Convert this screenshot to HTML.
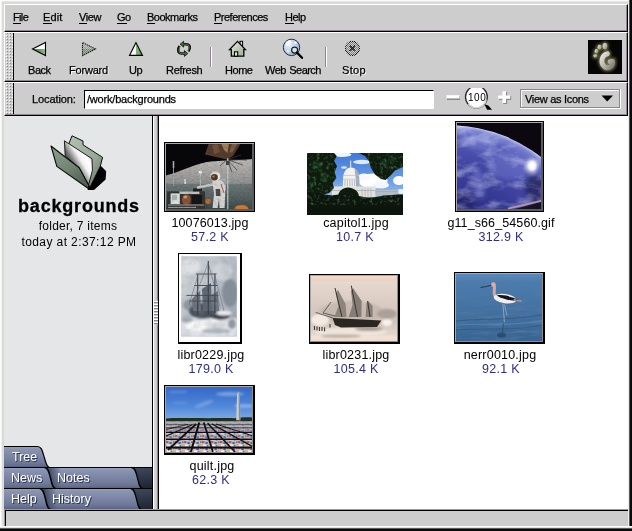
<!DOCTYPE html>
<html>
<head>
<meta charset="utf-8">
<title>Nautilus - backgrounds</title>
<style>
html,body{margin:0;padding:0;}
body{width:632px;height:531px;position:relative;overflow:hidden;background:#dadad6;font-family:"Liberation Sans",sans-serif;color:#000;}
.abs,.t,.m,.lab,.sz,.tab{position:absolute;}
.t,.m,.lab,.sz,.tab,.sb{white-space:nowrap;line-height:1;will-change:transform;}
/* window frame */
#frame-l0{left:0;top:0;width:1px;height:531px;background:#fdfdfd;}
#frame-l1{left:1px;top:1px;width:1px;height:527px;background:#f2f2ea;}
#frame-t0{left:0;top:0;width:631px;height:1px;background:#fbfbfb;}
#frame-t1{left:1px;top:1px;width:629px;height:1px;background:#e6e6de;}
#frame-r{left:628px;top:0;width:4px;height:531px;background:linear-gradient(to right,#ececec 0,#ececec 1px,#5c5c5c 1px,#5c5c5c 2px,#0a0a0a 2px);}
#frame-b{left:0;top:526px;width:632px;height:5px;background:linear-gradient(to bottom,#fdfdfd 0,#fdfdfd 1px,#e4e4e4 1px,#e4e4e4 2px,#5c5c5c 2px,#5c5c5c 3px,#0a0a0a 3px);}
/* bars */
.bar{position:absolute;left:4px;width:624px;background:#cdcdcd;box-sizing:border-box;border-top:1px solid #fff;border-left:1px solid #fff;border-bottom:1px solid #000;border-right:1px solid #000;}
.bar:after{content:"";position:absolute;left:0;top:0;right:0;bottom:0;border-right:1px solid #8e868e;border-bottom:1px solid #8e868e;}
.handle{position:absolute;left:0;top:0;width:8px;bottom:0;border-right:1px solid #000;
 background-color:#cdcdcd;
 background-image:radial-gradient(circle at 0.5px 0.5px,#fff 0.6px,rgba(255,255,255,0) 0.9px),radial-gradient(circle at 1.5px 1.5px,#8a8a8a 0.6px,rgba(138,138,138,0) 0.9px);
 background-size:3px 3px,3px 3px;background-position:1px 2px,1px 2px;}
.m{top:12px;font-size:11px;letter-spacing:-0.5px;-webkit-text-stroke:0.25px #000;}
.m u{text-decoration:none;border-bottom:1px solid #000;padding-bottom:0;padding-right:1.5px;margin-right:-1.5px;}
.t{font-size:11px;letter-spacing:-0.45px;top:65px;-webkit-text-stroke:0.25px #000;}
.dis{text-shadow:1px 1px 0 #fff;}
.sep{position:absolute;top:47px;width:1px;height:20px;background:#8e868e;border-right:1px solid #fff;}
.lab{font-size:12.5px;text-align:center;width:140px;letter-spacing:0.1px;}
.sz{font-size:12.5px;text-align:center;width:140px;color:#2e2e8a;letter-spacing:0.3px;}
.frame{position:absolute;box-sizing:border-box;border:1px solid #000;background:#5c5c5c;}
.frame:before{content:"";position:absolute;left:0;top:0;right:0;bottom:0;border-top:1px solid #a8a8a8;border-left:1px solid #a8a8a8;}
.frame svg{position:absolute;left:1px;top:1px;display:block;}
.f2{border-width:1px 2px 2px 1px;background:#8c8c8c;}
.f4{background:#fdfdfd;}
.f4:before{display:none;}
.f4 svg{left:0;top:0;}
svg{display:block;}
.tab{font-size:12.5px;color:#fff;text-shadow:1px 1px 0 #2c3450;}
</style>
</head>
<body>
<!-- window frame -->
<div class="abs" id="frame-t0"></div><div class="abs" id="frame-t1"></div>
<div class="abs" id="frame-l0"></div><div class="abs" id="frame-l1"></div>
<div class="abs" id="frame-r"></div><div class="abs" id="frame-b"></div>

<!-- MENUBAR -->
<div class="bar" id="menubar" style="top:4px;height:28px;"></div>
<span class="m" style="left:13px;letter-spacing:-0.65px;"><u>F</u>ile</span>
<span class="m" style="left:43px;letter-spacing:0.1px;"><u>E</u>dit</span>
<span class="m" style="left:79px;"><u>V</u>iew</span>
<span class="m" style="left:117px;"><u>G</u>o</span>
<span class="m" style="left:147px;"><u>B</u>ookmarks</span>
<span class="m" style="left:214px;"><u>P</u>references</span>
<span class="m" style="left:285px;"><u>H</u>elp</span>

<!-- TOOLBAR -->
<div class="bar" id="toolbar" style="top:32px;height:50px;"><div class="handle"></div></div>
<span class="t" style="left:28px;">Back</span>
<span class="t dis" style="left:69px;letter-spacing:-0.2px;">Forward</span>
<span class="t" style="left:129px;">Up</span>
<span class="t" style="left:166px;letter-spacing:-0.3px;">Refresh</span>
<span class="t" style="left:225px;">Home</span>
<span class="t" style="left:265px;word-spacing:1px;letter-spacing:-0.55px;">Web Search</span>
<span class="t dis" style="left:342px;letter-spacing:0.3px;">Stop</span>
<div class="sep" style="left:210px;"></div>
<div class="sep" style="left:325px;"></div>


<!-- TOOLBAR ICONS -->
<svg class="abs" style="left:0;top:0;z-index:5;" width="632" height="116" viewBox="0 0 632 116">
<defs>
<linearGradient id="gBack" x1="0" y1="0" x2="0" y2="1"><stop offset="0" stop-color="#fff"/><stop offset="0.5" stop-color="#f2f8f0"/><stop offset="0.5" stop-color="#4f8c48"/><stop offset="1" stop-color="#93c088"/></linearGradient>
<linearGradient id="gUp" x1="0" y1="0" x2="1" y2="0"><stop offset="0" stop-color="#fff"/><stop offset="0.5" stop-color="#f6f0f4"/><stop offset="0.5" stop-color="#86b87c"/><stop offset="1" stop-color="#5a9852"/></linearGradient>
<linearGradient id="gHome" x1="0" y1="0" x2="1" y2="1"><stop offset="0" stop-color="#fbfcfa"/><stop offset="0.45" stop-color="#c4ceba"/><stop offset="0.8" stop-color="#aab6a0"/><stop offset="1" stop-color="#e0e4da"/></linearGradient>
<radialGradient id="gGlobe" cx="0.35" cy="0.35" r="0.75"><stop offset="0" stop-color="#eef4fb"/><stop offset="0.6" stop-color="#b4cce6"/><stop offset="1" stop-color="#90acd0"/></radialGradient>
<pattern id="stip" width="2" height="2" patternUnits="userSpaceOnUse"><rect width="1" height="1" fill="#cdcdcd"/><rect x="1" y="1" width="1" height="1" fill="#cdcdcd"/></pattern>
<filter id="blur1" x="-30%" y="-30%" width="160%" height="160%"><feGaussianBlur stdDeviation="1.6"/></filter>
<filter id="blur05" x="-30%" y="-30%" width="160%" height="160%"><feGaussianBlur stdDeviation="0.5"/></filter>
<linearGradient id="gFoot" x1="0" y1="0" x2="1" y2="1"><stop offset="0" stop-color="#e8e4e0"/><stop offset="0.6" stop-color="#b0aca8"/><stop offset="1" stop-color="#807c78"/></linearGradient>
</defs>
<!-- back -->
<linearGradient id="gBackH" x1="0" y1="0" x2="1" y2="0"><stop offset="0" stop-color="#3f7f3c"/><stop offset="0.6" stop-color="#6aa262"/><stop offset="1" stop-color="#94c488"/></linearGradient>
<polygon points="32.5,49 45.5,42.5 45.5,55.5" fill="#fdfdfd"/>
<polygon points="32.5,49 45.5,49 45.5,55.5" fill="url(#gBackH)"/>
<polygon points="32.5,49 45.5,42.5 45.5,55.5" fill="none" stroke="#000" stroke-width="1.1"/>
<!-- forward (insensitive) -->
<linearGradient id="gFwd" x1="0" y1="0" x2="0" y2="1"><stop offset="0" stop-color="#b8bcb8"/><stop offset="0.5" stop-color="#a6aca6"/><stop offset="0.5" stop-color="#769274"/><stop offset="1" stop-color="#92a88e"/></linearGradient>
<pattern id="stipd" width="2" height="2" patternUnits="userSpaceOnUse"><rect width="1" height="1" fill="#fff" fill-opacity="0.35"/><rect x="1" y="1" width="1" height="1" fill="#fff" fill-opacity="0.35"/><rect x="1" y="0" width="1" height="1" fill="#000" fill-opacity="0.12"/><rect x="0" y="1" width="1" height="1" fill="#000" fill-opacity="0.12"/></pattern>
<polygon points="95.5,49 82.5,42.5 82.5,55.5" fill="url(#gFwd)"/>
<polygon points="95.5,49 82.5,42.5 82.5,55.5" fill="url(#stipd)" stroke="#1a1a1a" stroke-width="1.1" stroke-dasharray="1.4 0.7"/>
<!-- up -->
<polygon points="136,42.6 129.5,55.4 142.5,55.4" fill="url(#gUp)" stroke="#000" stroke-width="1.1"/>
<!-- refresh -->
<g fill="none" stroke-linecap="butt">
<path d="M188.4,51.4 C190.8,48.8 190.4,44.2 186.4,44.2 L183.4,44.2" stroke="#0a0a0a" stroke-width="2.4"/>
<path d="M179.6,46 C177.2,48.6 177.6,53.5 181.6,53.5 L184.6,53.5" stroke="#0a0a0a" stroke-width="2.4"/>
<polygon points="180.2,44.2 183.6,41.3 183.6,47.1" fill="#4a7040" stroke="#0a0a0a" stroke-width="0.8"/>
<polygon points="187.8,53.5 184.4,50.6 184.4,56.4" fill="#4a7040" stroke="#0a0a0a" stroke-width="0.8"/>
<path d="M188,50.9 C189.8,48.6 189.6,44.2 186.4,44.2 L183,44.2" stroke="#4a7040" stroke-width="1.1"/>
<path d="M180,46.5 C178.2,48.8 178.4,53.5 181.6,53.5 L185,53.5" stroke="#4a7040" stroke-width="1.1"/>
</g>
<!-- home -->
<rect x="240" y="41.3" width="2.6" height="6" fill="#dfe5d8" stroke="#000" stroke-width="1"/>
<polygon points="237.5,41.4 229.6,49.6 231.3,49.6 231.3,56.2 243.8,56.2 243.8,49.6 245.4,49.6" fill="url(#gHome)" stroke="#000" stroke-width="1.3" stroke-linejoin="miter"/>
<rect x="234.5" y="51.8" width="3.2" height="4.4" fill="#e4e8de" stroke="#000" stroke-width="1.1"/>
<!-- web search -->
<circle cx="291.5" cy="47.4" r="8.2" fill="url(#gGlobe)" stroke="#2a2a2a" stroke-width="1"/>
<path d="M286,42 q2.5,-2.5 5,-1.5 q1,1.8 -1,3.4 q-1.2,2.4 -3.2,2 q-1.8,-1.8 -0.8,-3.9z M294,41.5 q2,-0.5 3,1.5 q-1,1.5 -2.5,0.5z M287.5,49.5 q1.5,0.5 1.5,2.5 q-1,1 -2,-0.5z" fill="#fff" opacity="0.9"/>
<circle cx="294.6" cy="50.1" r="3" fill="#dbe6f2" fill-opacity="0.8" stroke="#222" stroke-width="1.2"/>
<path d="M297,52.6 L302,57.8" stroke="#000" stroke-width="2.3" stroke-linecap="round"/>
<!-- stop (insensitive) -->
<circle cx="352.4" cy="48.3" r="7" fill="#a87878" stroke="#000" stroke-width="1.2"/>
<path d="M349.6,45.5 L355.2,51.1 M355.2,45.5 L349.6,51.1" stroke="#fff" stroke-width="3"/>
<path d="M349.6,45.5 L355.2,51.1 M355.2,45.5 L349.6,51.1" stroke="#000" stroke-width="1.8"/>
<rect x="344" y="40" width="17" height="17" fill="url(#stip)"/>
<path d="M350,45.9 L354.8,50.7 M354.8,45.9 L350,50.7" stroke="#222" stroke-width="1.5" opacity="0.75"/>
<!-- gnome logo -->
<rect x="588" y="40" width="34" height="34" fill="#050505"/>
<g filter="url(#blur1)" opacity="0.75" stroke="#9a9a58" fill="#9a9a58">
<path d="M607.4,53.8 C602,54.8 600.2,62 603.8,66 C607,69.4 612.4,67.4 612.6,62.6 L612.4,61.4 L610,61.6" fill="none" stroke-width="7" stroke-linecap="round"/>
<ellipse cx="605" cy="46" rx="3" ry="3.8"/><ellipse cx="599.2" cy="47.4" rx="2.5" ry="3"/><ellipse cx="596.2" cy="51.8" rx="2.4" ry="2.6"/><ellipse cx="595.2" cy="56.2" rx="2.4" ry="2.2"/>
</g>
<g filter="url(#blur05)">
<path d="M607.4,53.8 C602,54.8 600.2,62 603.8,66 C607,69.4 612.4,67.4 612.6,62.6 L612.4,61.4 L610,61.6" fill="none" stroke="url(#gFoot)" stroke-width="4.8" stroke-linecap="round" stroke-linejoin="round"/>
<g fill="url(#gFoot)"><ellipse cx="605" cy="46.2" rx="2.3" ry="3.1"/><ellipse cx="599.5" cy="47.2" rx="1.9" ry="2.4"/><ellipse cx="596.4" cy="51.2" rx="1.8" ry="2.1"/><ellipse cx="595.3" cy="55.8" rx="2" ry="1.6"/></g>
</g>
<!-- zoom controls -->
<rect x="447" y="96" width="13" height="4" fill="#8c8c8c"/><rect x="446.5" y="95.2" width="13" height="3.2" fill="#fff"/>
<clipPath id="zclip"><rect x="460" y="88" width="36" height="26"/></clipPath>
<g clip-path="url(#zclip)"><circle cx="476.4" cy="97" r="10.9" fill="#fff" stroke="#2a2a2a" stroke-width="1.3"/>
<path d="M468.4,103.8 A10,10 0 0 0 486.2,99.5" fill="none" stroke="#d4d4d4" stroke-width="1.6"/></g>
<polygon points="484.4,104.3 488.3,105.6 492,109.7 487.1,109.7" fill="#000"/>
<path d="M503.2,92 h4 v4 h4 v4 h-4 v4 h-4 v-4 h-4 v-4 h4z" fill="#8c8c8c"/>
<path d="M502.4,91.2 h3.6 v4.2 h4.2 v3.4 h-4.2 v4.2 h-3.6 v-4.2 h-4.2 v-3.4 h4.2z" fill="#fff"/>
<!-- option menu -->
<rect x="520.5" y="89.5" width="99" height="18" fill="none" stroke="#8e868e" stroke-width="1"/>
<path d="M521.5,107 V90.5 H619" fill="none" stroke="#fff" stroke-width="1"/>
<path d="M520,108.5 H620.5 V89" fill="none" stroke="#fff" stroke-width="1"/>
<polygon points="601.5,95.5 613,95.5 607.25,101.6" fill="#000"/>
</svg>
<span class="t" style="left:525px;top:94px;letter-spacing:-0.3px;z-index:6;">View as Icons</span>
<span class="t" style="left:468px;top:93px;font-size:10px;letter-spacing:0.55px;z-index:6;-webkit-text-stroke:0;">100</span>

<!-- LOCATION BAR -->
<div class="bar" id="locbar" style="top:82px;height:34px;"><div class="handle"></div></div>
<span class="t" style="left:32px;top:94px;letter-spacing:-0.1px;">Location:</span>
<div class="abs" id="entry" style="left:84px;top:90px;width:350px;height:19px;box-sizing:border-box;background:#fff;border-top:1px solid #000;border-left:1px solid #000;border-bottom:1px solid #fff;border-right:1px solid #fff;"></div>
<span class="t" style="left:87px;top:94px;letter-spacing:-0.2px;">/work/backgrounds</span>

<!-- MAIN -->
<div class="abs" id="content" style="left:159px;top:116px;width:469px;height:393px;background:#fff;"></div>
<div class="abs" id="sidebar" style="left:4px;top:116px;width:148px;height:393px;background:#e5e6e7 repeating-linear-gradient(to bottom,#e6e7e8 0,#e6e7e8 1px,#e4e5e6 1px,#e4e5e6 2px);"></div>
<div class="abs" id="splitter" style="left:152px;top:116px;width:7px;height:393px;background:linear-gradient(to right,#000 0,#000 1px,#fff 1px,#fff 2px,#dedade 2px,#c8c2c8 5px,#8a848a 5px,#8a848a 6px,#000 6px);"></div>


<!-- SIDEBAR CONTENT -->
<svg class="abs" style="left:4px;top:116px;" width="148" height="100" viewBox="4 116 148 100">
<defs>
<linearGradient id="gFlapF" x1="0" y1="0" x2="0.6" y2="1"><stop offset="0" stop-color="#8c9e8e"/><stop offset="0.6" stop-color="#728474"/><stop offset="1" stop-color="#526254"/></linearGradient>
<linearGradient id="gFlapB" x1="0" y1="0" x2="1" y2="1"><stop offset="0" stop-color="#b4c2b4"/><stop offset="0.6" stop-color="#98a898"/><stop offset="1" stop-color="#5e6c60"/></linearGradient>
<linearGradient id="gPaper" gradientUnits="userSpaceOnUse" x1="66" y1="172" x2="92" y2="156"><stop offset="0" stop-color="#101010"/><stop offset="0.36" stop-color="#6e6e6e"/><stop offset="0.62" stop-color="#f2f2f2"/><stop offset="0.8" stop-color="#fff"/><stop offset="1" stop-color="#d8d8d8"/></linearGradient>
<filter id="fb" x="-30%" y="-30%" width="160%" height="160%"><feGaussianBlur stdDeviation="0.7"/></filter>
</defs>
<polygon points="100.5,165.5 106.2,171.2 105.6,179.4 94,190 87.6,190 89,184" fill="#000" filter="url(#fb)"/>
<polygon points="72,135.8 83,141 83,144.8 102.6,157.4 100.2,166.6 90,187.2 86,182 68,146" fill="url(#gFlapB)" stroke="#0a0a0a" stroke-width="1"/>
<polygon points="64.4,140.8 92,158.8 92.4,170.4 88.6,185 79.2,167.8 65.2,156" fill="url(#gPaper)" stroke="#0a0a0a" stroke-width="0.9"/>
<polygon points="51,146 79.2,167.8 88.8,185.6 88,188.2 56.8,166.4" fill="url(#gFlapF)" stroke="#0a0a0a" stroke-width="1.1" stroke-linejoin="round"/>
</svg>
<span class="sb abs" style="left:4.5px;top:197px;width:148px;text-align:center;font-weight:bold;font-size:18px;letter-spacing:0.8px;-webkit-text-stroke:0.3px #000;">backgrounds</span>
<span class="sb abs" style="left:4px;top:220px;width:148px;text-align:center;font-size:12px;letter-spacing:0.25px;">folder, 7 items</span>
<span class="sb abs" style="left:5px;top:236px;width:148px;text-align:center;font-size:12px;letter-spacing:0.4px;">today at 2:37:12 PM</span>


<!-- SIDEBAR TABS -->
<svg class="abs" style="left:4px;top:445px;" width="148" height="65" viewBox="4 445 148 65">
<defs>
<linearGradient id="gTab" x1="0" y1="0" x2="0" y2="1"><stop offset="0" stop-color="#98a2bd"/><stop offset="0.12" stop-color="#8a94b1"/><stop offset="0.5" stop-color="#7b85a3"/><stop offset="0.8" stop-color="#6c7696"/><stop offset="0.93" stop-color="#606a8a"/><stop offset="1" stop-color="#505a7a"/></linearGradient>
<linearGradient id="gFill" x1="0" y1="0" x2="1" y2="1"><stop offset="0" stop-color="#5a6278"/><stop offset="0.5" stop-color="#3e465a"/><stop offset="1" stop-color="#1c2230"/></linearGradient>
<linearGradient id="gShade" x1="0" y1="0" x2="1" y2="0"><stop offset="0" stop-color="#20283c" stop-opacity="0.75"/><stop offset="1" stop-color="#20283c" stop-opacity="0"/></linearGradient>
</defs>
<!-- row1: Tree -->
<path d="M4,446.5 H37.5 C42,446.5 42.5,452 44.5,458 C46,463 46.5,467 49.5,467.5 H4 Z" fill="url(#gTab)"/>
<path d="M4,446.5 H37.5 C42,446.5 42.5,452 44.5,458 C46,463 46.5,467 49.5,467.5" fill="none" stroke="#000" stroke-width="1.2"/>
<!-- row2 -->
<rect x="4" y="467" width="148" height="21.5" fill="url(#gFill)"/>
<path d="M46,467.5 H131.5 C135.5,467.5 136,473 137.5,478 C139,484 139.5,488 142.5,488.5 H46 Z" fill="url(#gTab)"/>
<path d="M131.5,467.5 C135.5,467.5 136,473 137.5,478 C139,484 139.5,488 142.5,488.5" fill="none" stroke="#000" stroke-width="1.3"/>
<rect x="47" y="468" width="14" height="20" fill="url(#gShade)"/>
<path d="M4,467.5 H44.5 C48.5,467.5 49,473 50.5,478 C52,484 52.5,488 55.5,488.5 H4 Z" fill="url(#gTab)"/>
<path d="M44.5,467.5 C48.5,467.5 49,473 50.5,478 C52,484 52.5,488 55.5,488.5" fill="none" stroke="#000" stroke-width="1.5"/>
<path d="M4,467.5 H152" stroke="#000" stroke-width="1"/>
<!-- row3 -->
<rect x="4" y="488" width="148" height="21.5" fill="url(#gFill)"/>
<path d="M42,488.5 H130.5 C134.5,488.5 135,494 136.5,499 C138,505 138.5,509 141.5,509.5 H42 Z" fill="url(#gTab)"/>
<path d="M130.5,488.5 C134.5,488.5 135,494 136.5,499 C138,505 138.5,509 141.5,509.5" fill="none" stroke="#000" stroke-width="1.3"/>
<rect x="43" y="489" width="14" height="20" fill="url(#gShade)"/>
<path d="M4,488.5 H39.5 C43.5,488.5 44,494 45.5,499 C47,505 47.5,509 50.5,509.5 H4 Z" fill="url(#gTab)"/>
<path d="M39.5,488.5 C43.5,488.5 44,494 45.5,499 C47,505 47.5,509 50.5,509.5" fill="none" stroke="#000" stroke-width="1.5"/>
<path d="M4,488.5 H152" stroke="#000" stroke-width="1"/>
</svg>
<span class="tab" style="left:12px;top:451px;">Tree</span>
<span class="tab" style="left:11px;top:472px;">News</span>
<span class="tab" style="left:57px;top:472px;">Notes</span>
<span class="tab" style="left:11px;top:493px;">Help</span>
<span class="tab" style="left:52px;top:493px;">History</span>


<!-- ICON VIEW -->
<svg width="0" height="0" style="position:absolute"><defs>
<filter id="pb" x="-5%" y="-5%" width="110%" height="110%"><feGaussianBlur stdDeviation="0.55"/></filter>
<filter id="pb1" x="-5%" y="-5%" width="110%" height="110%"><feGaussianBlur stdDeviation="1"/></filter>
<filter id="pb2" x="-10%" y="-10%" width="120%" height="120%"><feGaussianBlur stdDeviation="2.2"/></filter>
</defs></svg>

<!-- 1: 10076013.jpg -->
<div class="frame" style="left:164px;top:142px;width:91px;height:70px;">
<svg width="86" height="65" viewBox="0 0 86 65">
<defs>
<linearGradient id="m1hill" x1="0" y1="0" x2="0" y2="1"><stop offset="0" stop-color="#c0bcb8"/><stop offset="0.5" stop-color="#a4a2a0"/><stop offset="1" stop-color="#868a8a"/></linearGradient>
<linearGradient id="m1gnd" x1="0" y1="0" x2="0" y2="1"><stop offset="0" stop-color="#6e7a7a"/><stop offset="0.5" stop-color="#566262"/><stop offset="1" stop-color="#364040"/></linearGradient>
<filter id="m1n" x="0" y="0" width="100%" height="100%"><feTurbulence type="fractalNoise" baseFrequency="0.35 0.6" numOctaves="2" seed="7"/><feColorMatrix type="matrix" values="0 0 0 0 0  0 0 0 0 0  0 0 0 0 0  1.8 0 0 0 -0.7"/></filter>
<clipPath id="m1c"><rect width="86" height="65"/></clipPath>
</defs>
<rect width="86" height="65" fill="#08080a"/>
<g clip-path="url(#m1c)">
<g filter="url(#pb)">
<path d="M-2,32 C8,29.6 16,26 24.4,23 C32,20 38,18.4 45,17.6 C60,16.2 75,16 88,15 L88,44 L-2,44 Z" fill="url(#m1hill)"/>
<rect x="-2" y="39.8" width="90" height="28" fill="url(#m1gnd)"/>
<polygon points="39,10.4 43,-1 75,-1 67,12 61,15.5" fill="#543c2e"/>
<polygon points="55,-1 63,-1 61.5,9 58,6" fill="#a07e5c"/>
<polygon points="46,1 52,0 54,8 48,10" fill="#70523e"/>
<polygon points="66,-1 72,-1 66,9 63.4,8" fill="#7c5c44"/>
<path d="M61,15.5 L71,26 M61,15.5 L77,21 M61,15.5 L81,16 M61,15.5 L54,22 M61,15.5 L66,28 M61,15.5 L75,11" stroke="#38383c" stroke-width="0.7" fill="none"/>
<path d="M61.8,14 V66" stroke="#c8d0ca" stroke-width="1.1"/>
<rect x="60" y="17" width="3.6" height="4" fill="#40444a"/>
<path d="M7.5,17 V42" stroke="#a4a4a4" stroke-width="0.9"/><path d="M7.5,17 V24" stroke="#b0b0b0" stroke-width="1.6"/>
<path d="M34.3,29 V47" stroke="#c0c0c0" stroke-width="0.9"/><ellipse cx="34.3" cy="28" rx="1.8" ry="1.6" fill="#f0f0f0"/>
<rect x="18.2" y="35" width="1.8" height="5" fill="#d8d8d8"/>
<rect x="1" y="47.4" width="38" height="17.6" fill="#343432"/>
<rect x="4.6" y="49.4" width="9.2" height="10.6" fill="#dce2e2"/>
<rect x="6" y="51" width="5" height="5" fill="#a8b4b8"/>
<rect x="13.4" y="47.4" width="20" height="2.6" fill="#c4c4c0"/>
<ellipse cx="20.4" cy="55.6" rx="4.4" ry="5.4" fill="#8e5432"/>
<ellipse cx="19.4" cy="53" rx="2" ry="1.6" fill="#c89a78"/>
<rect x="25.6" y="51" width="10.4" height="9" fill="#161616"/>
<rect x="27" y="44.4" width="9" height="3" fill="#202020"/>
<path d="M2,61 H38 M2,63.4 H30" stroke="#b0b0ac" stroke-width="0.9"/>
<circle cx="42.2" cy="57.3" r="2.6" fill="#c46a2a"/>
<rect x="54" y="34" width="6" height="12" fill="#a8a8a6"/>
<path d="M47,40.5 L32,43.5" stroke="#cacac8" stroke-width="2.6" stroke-linecap="round"/>
<path d="M46.5,38 C46,36 52,35.5 55,36.5 C58,37.5 59.6,42 59.2,48 L58.6,64 L53.6,64 L53,54 L51.6,64 L46.6,64 L48,50 Z" fill="#d6d6d4"/>
<path d="M49.6,45 L54,45 L54.6,52 L50,52 Z" fill="#4c4c4a"/>
<path d="M55,40 L58,49" stroke="#a43c30" stroke-width="0.8"/>
<ellipse cx="49.4" cy="32.4" rx="5" ry="5.2" fill="#e2e2e0"/>
<ellipse cx="48.4" cy="33.2" rx="3.4" ry="3.2" fill="#56381e"/>
<ellipse cx="47.6" cy="32.4" rx="1.2" ry="1" fill="#b08858"/>
<ellipse cx="75.5" cy="64.8" rx="7" ry="3.8" fill="#d27a30"/>
</g>
<rect width="86" height="65" filter="url(#m1n)" opacity="0.16"/>
</g>
</svg></div>
<span class="lab" style="left:140px;top:217px;">10076013.jpg</span>
<span class="sz" style="left:140px;top:231px;">57.2 K</span>


<!-- 2: capitol1.jpg -->
<svg class="abs" style="left:307px;top:153px;" width="96" height="62" viewBox="0 0 96 62">
<defs><filter id="c2n" x="0" y="0" width="100%" height="100%"><feTurbulence type="fractalNoise" baseFrequency="0.3" numOctaves="2" seed="4"/><feColorMatrix type="matrix" values="0 0 0 0 0.10  0 0 0 0 0.22  0 0 0 0 0.10  2.4 0 0 0 -1.2"/></filter>
<clipPath id="c2t"><path d="M-1,-1 L26,-1 L29.8,3 L27,8 L30,13 L27.6,19 L29.4,25 L25.6,30 L27,35 L22,40 L-1,46 Z"/><path d="M49.5,-1 L58,3 L62,8 L64,15 L68,21.6 L74,26 L78.6,27 L84,22 L88,17.4 L97,13.4 L97,-1 Z"/><path d="M-1,39 C8,41 16,40.4 25,42.6 C32,41 44,41.4 53,43.2 C60,45 66,44.6 72,43.4 C78,42 84,42.4 90,41.6 C93,41 95,42 97,41.4 L97,52 L-1,52 Z"/></clipPath>
<linearGradient id="c2sky" x1="0" y1="0" x2="0" y2="1"><stop offset="0" stop-color="#3f78d8"/><stop offset="0.45" stop-color="#6c9ee6"/><stop offset="0.75" stop-color="#9cc0f0"/><stop offset="1" stop-color="#b4d0f4"/></linearGradient></defs>
<rect width="96" height="62" fill="url(#c2sky)"/>
<g filter="url(#pb)">
<ellipse cx="35" cy="1.6" rx="9.5" ry="2.4" fill="#eef4fe"/>
<ellipse cx="55" cy="9" rx="9" ry="2.2" fill="#dce8fb"/>
<ellipse cx="37" cy="14.5" rx="3" ry="1.2" fill="#d4e2f8"/>
<ellipse cx="66" cy="28" rx="14.5" ry="7.6" fill="#fff"/><ellipse cx="57" cy="24" rx="6" ry="3.6" fill="#f6f9ff"/><ellipse cx="74" cy="32" rx="8" ry="3.6" fill="#f2f6fd"/>
<ellipse cx="92" cy="27.5" rx="6" ry="4.6" fill="#fff"/><ellipse cx="94" cy="38.5" rx="4" ry="2.4" fill="#e8f0fa"/>
<path d="M43.6,7.6 V15.5" stroke="#cfd4dc" stroke-width="1.3"/>
<path d="M35.8,34 L36,27 C36,19 39.4,14.6 44,14.6 C48.6,14.6 52.4,19 52.4,27 L52.6,34 Z" fill="#f2f2ee"/>
<path d="M47.5,15.6 C50.6,17.6 52.4,21.5 52.4,27 L52.6,34 L49,34 L48.8,26 Z" fill="#a4acbc"/>
<path d="M36,26.2 H52.4 M36.6,22.4 H51.8" stroke="#b8bcc6" stroke-width="0.7"/>
<path d="M38,27 V33 M40.4,27 V33 M42.8,27 V33 M45.2,27 V33 M47.6,27 V33" stroke="#8c94a2" stroke-width="0.6"/>
<rect x="24.8" y="33.4" width="43.8" height="11" fill="#e2e2dc"/>
<rect x="68.4" y="36.8" width="23" height="6" fill="#b4bcc6"/>
<path d="M24.8,37.5 H68 M68.4,38.6 H91.4" stroke="#a0a6ae" stroke-width="0.7"/>
<path d="M55,35 V44 M58,35 V44 M61,35 V44 M64,35 V44" stroke="#a8aeb6" stroke-width="0.7"/>
<path d="M-1,-1 L26,-1 L29.8,3 L27,8 L30,13 L27.6,19 L29.4,25 L25.6,30 L27,35 L22,40 L-1,46 Z" fill="#0b1b0c"/>
<path d="M49.5,-1 L58,3 L62,8 L64,15 L68,21.6 L74,26 L78.6,27 L84,22 L88,17.4 L97,13.4 L97,-1 Z" fill="#0c1c0e"/>
<path d="M6,8 l8,1 l1,6 l-7,2 l-4,-4z M14,20 l7,1 l0,6 l-7,1z M4,27 l5,3 l-3,5 l-4,-3z M74,6 l8,2 l-2,6 l-7,-2z M84,3 l6,2 l-2,5 l-6,-1z" fill="#16301a" filter="url(#pb1)"/>
<path d="M31,44 C31,38 36,34.5 41,34.5 C46,34.5 52,38 52,44 Z" fill="#0e1e10"/>
<path d="M-1,39 C8,41 16,40.4 25,42.6 C32,41 44,41.4 53,43.2 C60,45 66,44.6 72,43.4 C78,42 84,42.4 90,41.6 C93,41 95,42 97,41.4 L97,63 L-1,63 Z" fill="#08120a"/>
</g>
<g clip-path="url(#c2t)"><rect width="96" height="62" filter="url(#c2n)" opacity="0.75"/></g>
</svg>
<span class="lab" style="left:286px;top:217px;letter-spacing:0.2px;">capitol1.jpg</span>
<span class="sz" style="left:285px;top:231px;">10.7 K</span>

<!-- 3: g11_s66_54560.gif -->
<div class="frame" style="left:455px;top:121px;width:89px;height:91px;">
<svg width="84" height="86" viewBox="0 0 84 86">
<defs>
<radialGradient id="e3" gradientUnits="userSpaceOnUse" cx="-7.2" cy="149.6" r="147.2"><stop offset="0" stop-color="#24246a"/><stop offset="0.5" stop-color="#30328a"/><stop offset="0.78" stop-color="#4448a6"/><stop offset="0.92" stop-color="#565cb8"/><stop offset="0.975" stop-color="#7880d0"/><stop offset="0.992" stop-color="#a4aae6"/><stop offset="1" stop-color="#d4d8f8"/></radialGradient>
<clipPath id="e3c"><circle cx="-7.2" cy="149.6" r="147.2"/></clipPath>
<filter id="e3n" x="0" y="0" width="100%" height="100%"><feTurbulence type="fractalNoise" baseFrequency="0.05 0.09" numOctaves="4" seed="11"/><feColorMatrix type="matrix" values="0 0 0 0 0.82  0 0 0 0 0.85  0 0 0 0 1  2.6 0 0 0 -1.15"/></filter>
</defs>
<rect width="84" height="86" fill="#0c0810"/>
<circle cx="-7.2" cy="149.6" r="147.2" fill="url(#e3)"/>
<g clip-path="url(#e3c)">
<g filter="url(#pb2)">
<ellipse cx="52" cy="42" rx="22" ry="15" fill="#7078cc" opacity="0.5"/>
<ellipse cx="22" cy="20" rx="20" ry="7" fill="#8088d8" opacity="0.45" transform="rotate(12 22 20)"/>
<ellipse cx="22" cy="60" rx="5" ry="16" fill="#8890dc" opacity="0.45" transform="rotate(-12 22 60)"/>
<ellipse cx="6" cy="80" rx="12" ry="10" fill="#222260" opacity="0.6"/>
<ellipse cx="78" cy="66" rx="10" ry="14" fill="#20205a" opacity="0.75"/>
<ellipse cx="75" cy="43" rx="5.5" ry="6.5" fill="#fff"/>
</g>
<rect width="84" height="86" filter="url(#e3n)" opacity="0.42"/>
<ellipse cx="75.5" cy="42.5" rx="3.2" ry="4.2" fill="#fff" filter="url(#pb1)"/>
</g>
<polygon points="50,88 86,78.6 86,88" fill="#181226"/>
<path d="M51,85.6 L86,77.4" stroke="#b494a8" stroke-width="1.8" filter="url(#pb)"/>
</svg></div>
<span class="lab" style="left:431px;top:217px;">g11_s66_54560.gif</span>
<span class="sz" style="left:431px;top:231px;">312.9 K</span>


<!-- 4: libr0229.jpg -->
<div class="frame f2 f4" style="left:178px;top:253px;width:64px;height:91px;">
<svg width="61" height="88" viewBox="-1 -1 61 88">
<defs>
<linearGradient id="s4sky" x1="0" y1="0" x2="1" y2="1"><stop offset="0" stop-color="#d6dade"/><stop offset="0.5" stop-color="#b8bec6"/><stop offset="1" stop-color="#9ca4ae"/></linearGradient>
<clipPath id="s4c"><rect x="1.2" y="1.2" width="55.6" height="80.2"/></clipPath>
<filter id="s4n" x="0" y="0" width="100%" height="100%"><feTurbulence type="fractalNoise" baseFrequency="0.12" numOctaves="3" seed="5"/><feColorMatrix type="matrix" values="0 0 0 0 0.25  0 0 0 0 0.28  0 0 0 0 0.32  1.6 0 0 0 -0.62"/></filter>
</defs>
<rect x="-1" y="-1" width="61" height="88" fill="#fdfdfd"/>
<rect x="1.2" y="1.2" width="55.6" height="80.2" fill="url(#s4sky)"/>
<g clip-path="url(#s4c)">
<g filter="url(#pb1)">
<ellipse cx="50" cy="38" rx="8" ry="14" fill="#858d99"/>
<ellipse cx="42" cy="17" rx="10" ry="9" fill="#cdd1d7"/>
<ellipse cx="11" cy="50" rx="8" ry="6" fill="#8f97a1"/>
<ellipse cx="10" cy="12" rx="10" ry="9" fill="#dde0e4"/>
<rect x="0" y="63" width="59" height="19" fill="#dfe2e6"/>
<ellipse cx="24" cy="56" rx="15" ry="8" fill="#4a525c"/>
<ellipse cx="40" cy="61.5" rx="10" ry="3.2" fill="#3a4048"/>
<ellipse cx="18" cy="71" rx="12" ry="4.4" fill="#f9f9f9"/><ellipse cx="44" cy="58" rx="8" ry="2.6" fill="#eef0f2"/>
<ellipse cx="30" cy="66" rx="8" ry="2.4" fill="#f4f5f6"/>
<ellipse cx="36" cy="76" rx="14" ry="2.6" fill="#b0b6be"/><ellipse cx="7" cy="65" rx="6" ry="2.6" fill="#a4aab4"/>
<ellipse cx="52" cy="69" rx="4" ry="5" fill="#9098a2"/>
</g>
<g filter="url(#pb)">
<polygon points="12,44 20,36 21,56 13,56" fill="#69717b"/>
<polygon points="22,34 31,28 32,56 23,56" fill="#5d656f"/>
<polygon points="31,40 38,36 39,56 32,56" fill="#6b737d"/>
<path d="M28.3,6 V60 M17.7,19 V60 M34.9,19 V58" stroke="#363c44" stroke-width="1.1"/>
<path d="M16,19 H36.5 M14.4,30.5 H37.4 M6.5,40.4 H38.4 M9,46 H37" stroke="#3e444c" stroke-width="0.9"/>
<path d="M28.3,8 L14,44 M28.3,8 L40,52 M17.7,21 L9,50 M34.9,21 L44,56" stroke="#5a626c" stroke-width="0.5"/>
</g>
<rect width="59" height="86" filter="url(#s4n)" opacity="0.35"/>
</g>
</svg></div>
<span class="lab" style="left:141px;top:349px;letter-spacing:0.2px;">libr0229.jpg</span>
<span class="sz" style="left:141px;top:363px;">179.0 K</span>

<!-- 5: libr0231.jpg -->
<div class="frame f2" style="left:309px;top:274px;width:91px;height:70px;">
<svg width="86" height="65" viewBox="0 0 86 65">
<defs>
<linearGradient id="s5bg" x1="0" y1="0" x2="0" y2="1"><stop offset="0" stop-color="#f2dccc"/><stop offset="0.06" stop-color="#ecd2c0"/><stop offset="0.1" stop-color="#e6d8ce"/><stop offset="0.45" stop-color="#d8cac0"/><stop offset="0.7" stop-color="#cfc3b9"/><stop offset="0.9" stop-color="#e4d8ce"/><stop offset="0.94" stop-color="#f2e2d6"/><stop offset="1" stop-color="#f0dccc"/></linearGradient>
</defs>
<rect width="86" height="65" fill="url(#s5bg)"/>
<g filter="url(#pb1)">
<ellipse cx="40" cy="36" rx="32" ry="11" fill="#b8aca4" opacity="0.5"/>
<ellipse cx="76" cy="38" rx="10" ry="5" fill="#aca098"/>
<ellipse cx="9" cy="44" rx="9" ry="6" fill="#f4ece4"/>
<ellipse cx="76" cy="46.5" rx="5" ry="3.4" fill="#f8f2ec"/>
<ellipse cx="40" cy="56" rx="36" ry="4.5" fill="#efe5dc"/>
<ellipse cx="58" cy="53" rx="14" ry="2" fill="#a89c94"/>
<ellipse cx="30" cy="60" rx="20" ry="1.6" fill="#b8aca4"/>
</g>
<g filter="url(#pb)">
<polygon points="24.6,17 27,14 34.6,28 35.6,41 23.4,41 27.4,30" fill="#8e847c"/>
<polygon points="40,15 42,12 50.6,25 50.4,41 37.6,41 41.6,29" fill="#867c74"/>
<polygon points="55.6,27 57.6,25.4 61.6,30 61.6,41 54.6,41" fill="#8a8078"/>
<path d="M31,41 L24,12 M46.5,41 L40.3,9.6 M59,41 L56.6,25" stroke="#3a3430" stroke-width="1"/>
<path d="M22,42 L4.6,36.4 M24,40 L12,37 L20,26" stroke="#4a4440" stroke-width="0.8" fill="none"/>
<polygon points="21.6,42 70.4,44.6 66,51 30,51.4 24,49" fill="#2a2624"/>
<path d="M3.4,50 v4 M6,50.5 v4 M8.4,51 v4 M11,51 v4 M13.6,51.4 v4 M19,48 v3.6" stroke="#2e2a28" stroke-width="1"/>
</g>
</svg></div>
<span class="lab" style="left:286px;top:349px;letter-spacing:0.2px;">libr0231.jpg</span>
<span class="sz" style="left:286px;top:363px;">105.4 K</span>

<!-- 6: nerr0010.jpg -->
<div class="frame f2" style="left:454px;top:272px;width:91px;height:72px;">
<svg width="86" height="67" viewBox="0 0 86 67">
<defs>
<linearGradient id="w6" x1="0" y1="0" x2="0" y2="1"><stop offset="0" stop-color="#5a8aba"/><stop offset="0.12" stop-color="#4c7cae"/><stop offset="0.6" stop-color="#41709f"/><stop offset="1" stop-color="#386493"/></linearGradient>
<filter id="w6n" x="0" y="0" width="100%" height="100%"><feTurbulence type="fractalNoise" baseFrequency="0.04 0.32" numOctaves="3" seed="9"/><feColorMatrix type="matrix" values="0 0 0 0 0.1  0 0 0 0 0.2  0 0 0 0 0.36  2.6 0 0 0 -1.1"/></filter>
<linearGradient id="w6m" x1="0" y1="0" x2="0" y2="1"><stop offset="0" stop-color="#fff" stop-opacity="0.15"/><stop offset="0.5" stop-color="#fff" stop-opacity="0.6"/><stop offset="1" stop-color="#fff" stop-opacity="1"/></linearGradient>
<mask id="w6k"><rect width="86" height="67" fill="url(#w6m)"/></mask>
</defs>
<rect width="86" height="67" fill="url(#w6)"/>
<g mask="url(#w6k)"><rect width="86" height="67" filter="url(#w6n)" transform="rotate(-5 43 33)" opacity="0.9"/></g>
<g filter="url(#pb)" stroke-linecap="round" fill="none">
<path d="M0,47 C25,44 50,47 86,41 M0,56 C30,54 55,57 86,51" stroke="#2a4c74" stroke-width="0.9" opacity="0.6"/>
<path d="M0,51 C28,49 52,52.6 86,46.6" stroke="#6a98c4" stroke-width="0.8" opacity="0.6"/>
<ellipse cx="45.4" cy="61" rx="4.4" ry="2.6" fill="#1e3858" stroke="none" opacity="0.6"/><path d="M47.4,50 L46.4,58" stroke="#27456a" stroke-width="1.2" opacity="0.6"/>
<path d="M46.9,30 L48.4,47.7 M48.6,31 L50.8,41" stroke="#9cb0c4" stroke-width="0.8"/>
<path d="M35.6,11.2 C32,12 28.6,13 24.9,13.5" stroke="#1c2430" stroke-width="0.8"/>
<path d="M37.6,10.6 C40,13 37,17 38.6,21.6" stroke="#d8a89c" stroke-width="3"/>
<circle cx="37.4" cy="10.6" r="2.3" fill="#dcaca0" stroke="none"/>
<ellipse cx="49" cy="24.6" rx="11.4" ry="4.6" fill="#eceef0" stroke="none" transform="rotate(8 49 24.6)"/>
<path d="M40.6,21.4 C48,20 56,23 65,26.8 C57,27 48,26 40.6,21.4Z" fill="#14181e" stroke="none"/>
<path d="M58,25.6 L65,27.2" stroke="#c8a090" stroke-width="1.2"/>
</g>
</svg></div>
<span class="lab" style="left:430px;top:349px;letter-spacing:0.2px;">nerr0010.jpg</span>
<span class="sz" style="left:430.5px;top:363px;">92.1 K</span>

<!-- 7: quilt.jpg -->
<div class="frame f2" style="left:164px;top:385px;width:91px;height:70px;">
<svg width="86" height="65" viewBox="0 0 86 65">
<defs>
<linearGradient id="q7sky" x1="0" y1="0" x2="0" y2="1"><stop offset="0" stop-color="#3468c8"/><stop offset="0.55" stop-color="#5088d8"/><stop offset="1" stop-color="#86b0ea"/></linearGradient>
<linearGradient id="q7fade" x1="0" y1="0" x2="0" y2="1"><stop offset="0" stop-color="#a4a6b0" stop-opacity="0.85"/><stop offset="0.5" stop-color="#a4a6b0" stop-opacity="0.35"/><stop offset="1" stop-color="#a4a6b0" stop-opacity="0"/></linearGradient>
<pattern id="q7p" width="9" height="6" patternUnits="userSpaceOnUse"><rect width="9" height="6" fill="#bcbec8"/><rect x="0" y="0" width="2.4" height="2" fill="#c43c38"/><rect x="3.4" y="1" width="2.4" height="2" fill="#3c54b4"/><rect x="6.4" y="3.4" width="2.4" height="2" fill="#dcc440"/><rect x="1" y="3.4" width="3" height="2" fill="#f8f8f8"/><rect x="5" y="4" width="1.2" height="1.6" fill="#40884a"/><rect x="7" y="0.4" width="1.6" height="1.6" fill="#8a4aa0"/></pattern>
<clipPath id="q7c"><rect width="86" height="65"/></clipPath>
</defs>
<rect width="86" height="35" fill="url(#q7sky)"/>
<g filter="url(#pb1)" opacity="0.6"><ellipse cx="64" cy="7" rx="14" ry="2.2" fill="#9cbcec"/><ellipse cx="38" cy="17" rx="10" ry="2.2" fill="#86acE6" transform="rotate(-20 38 17)"/><ellipse cx="78" cy="19" rx="10" ry="2" fill="#a8c4ee"/><ellipse cx="12" cy="5" rx="10" ry="1.6" fill="#6c98de"/><ellipse cx="14" cy="16" rx="8" ry="1.4" fill="#6e9ade"/></g>
<g clip-path="url(#q7c)">
<rect y="33.6" width="86" height="32" fill="url(#q7p)"/>
<rect y="33.6" width="86" height="32" fill="url(#q7fade)"/>
<g filter="url(#pb)">
<path d="M0,31.6 C10,30.6 20,31.4 30,31 C45,31.4 60,30.8 68,31.2 C76,30.4 82,30 86,30.6 L86,34.2 L0,34.2Z" fill="#222e22"/>
<polygon points="71.1,7 72.5,4.2 73.8,7 74.3,33.2 70.2,33.2" fill="#cfcfca"/>
<polygon points="72.5,4.2 73.8,7 74.3,33.2 72.9,33.2" fill="#8c8c8e"/>
<g stroke="#101014" fill="none">
<path d="M33.2,35.5 L24.9,65" stroke-width="2"/><path d="M37.8,35.5 L46.9,65" stroke-width="1.8"/>
<path d="M30.2,37 L2,62.8" stroke-width="1.8"/><path d="M41.6,36.3 L69,65" stroke-width="1.6"/>
<path d="M46,37 L87,59.8" stroke-width="1.4"/><path d="M26.4,37.8 L0,49" stroke-width="1.2"/>
<path d="M50,37 L87,49" stroke-width="1"/><path d="M22,37.4 L0,42.4" stroke-width="0.8"/>
<path d="M0,37.6 H86" stroke-width="0.5"/><path d="M0,40.8 H86" stroke-width="0.8"/><path d="M0,45.4 H86" stroke-width="1.1"/><path d="M0,52.2 H86" stroke-width="1.5"/><path d="M0,60.4 H86" stroke-width="2"/>
</g>
</g>
</g>
</svg></div>
<span class="lab" style="left:141.5px;top:460px;letter-spacing:0.2px;">quilt.jpg</span>
<span class="sz" style="left:141px;top:474px;">62.3 K</span>

<div class="abs" id="grip" style="left:154px;top:301px;width:4px;height:24px;background:repeating-linear-gradient(to bottom,#fff 0,#fff 1px,#8a848a 1px,#8a848a 2px,#cdc8cd 2px,#cdc8cd 3px);transform:skewY(-14deg);"></div>
<!-- STATUS BAR -->
<div class="abs" id="status" style="left:4px;top:509px;width:624px;height:17px;box-sizing:border-box;background:#cdcdcd;border-top:1px solid #a098a0;border-left:1px solid #a098a0;"><div style="position:absolute;left:0;top:0;right:0;bottom:0;border-top:1px solid #000;border-left:1px solid #000;"></div></div>
</body>
</html>
